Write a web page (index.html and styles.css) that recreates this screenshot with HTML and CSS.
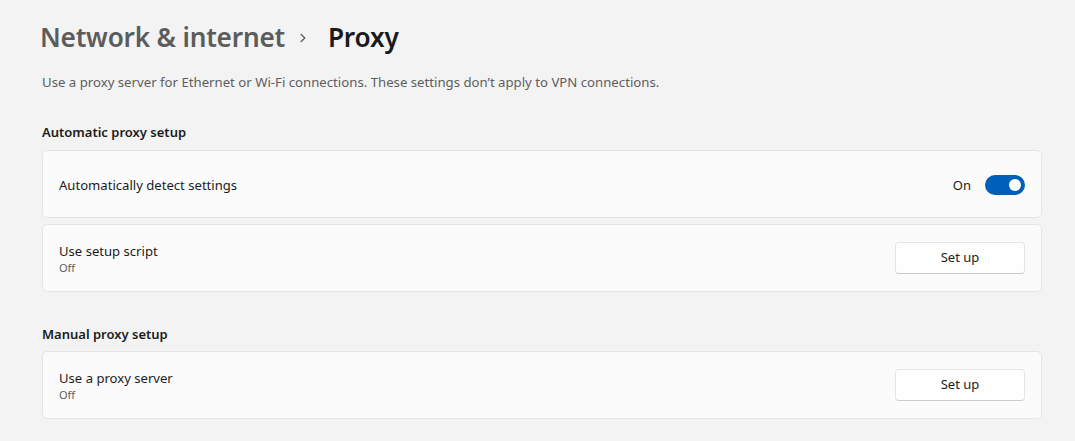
FILE: index.html
```html
<!DOCTYPE html>
<html lang="en">
<head>
<meta charset="utf-8">
<title>Proxy</title>
<link rel="stylesheet" href="styles.css">
</head>
<body>
<main class="page">
  <header class="breadcrumb">
    <span class="crumb-parent">Network &amp; internet</span>
    <svg class="crumb-chevron" width="12" height="12" viewBox="0 0 12 12" aria-hidden="true"><path d="M4.2 2.5 L7.8 6 L4.2 9.5" fill="none" stroke="#5f5f5f" stroke-width="1.4" stroke-linecap="round" stroke-linejoin="round"/></svg>
    <span class="crumb-current">Proxy</span>
  </header>
  <p class="description">Use a proxy server for Ethernet or Wi-Fi connections. These settings don’t apply to VPN connections.</p>

  <section class="group">
    <h2 class="group-title">Automatic proxy setup</h2>
    <div class="cards">
      <div class="card card-single">
        <div class="card-text"><div class="card-label">Automatically detect settings</div></div>
        <div class="card-action">
          <span class="toggle-label">On</span>
          <span class="toggle"><span class="toggle-knob"></span></span>
        </div>
      </div>
      <div class="card">
        <div class="card-text">
          <div class="card-label">Use setup script</div>
          <div class="card-sub">Off</div>
        </div>
        <div class="card-action"><button class="btn">Set up</button></div>
      </div>
    </div>
  </section>

  <section class="group group-manual">
    <h2 class="group-title">Manual proxy setup</h2>
    <div class="cards">
      <div class="card">
        <div class="card-text">
          <div class="card-label">Use a proxy server</div>
          <div class="card-sub">Off</div>
        </div>
        <div class="card-action"><button class="btn">Set up</button></div>
      </div>
    </div>
  </section>
</main>
</body>
</html>
```

FILE: styles.css
```css
* { box-sizing: border-box; }
html, body { margin: 0; padding: 0; }
body {
  background: #f3f3f3;
  font-family: "Noto Sans", "Open Sans", sans-serif;
  color: #1b1b1b;
  width: 1075px;
  height: 441px;
  overflow: hidden;
}
.page {
  padding: 17px 33px 0 42px;
}
.breadcrumb {
  display: flex;
  align-items: center;
  height: 40px;
  margin-left: -2px;
  font-size: 26.2px;
  font-weight: 600;
  letter-spacing: -0.2px;
}
.crumb-parent { color: #5c5c5c; }
.crumb-chevron { margin: 2px 19px 0 12px; }
.crumb-current { color: #1a1a1a; }
.description {
  margin: 15px 0 0 0;
  font-size: 13.2px;
  line-height: 20px;
  color: #5d5d5d;
}
.group { margin-top: 30px; }
.group-manual { margin-top: 32px; }
.group-title {
  margin: 0 0 8px 0;
  font-size: 13px;
  font-weight: 600;
  line-height: 20px;
  color: #1b1b1b;
}
.group-manual .group-title { margin-bottom: 7px; }
.cards {
  display: flex;
  flex-direction: column;
  gap: 6px;
}
.card {
  display: flex;
  align-items: center;
  justify-content: space-between;
  height: 68px;
  padding: 0 16px;
  background: #fbfbfb;
  border: 1px solid #e5e5e5;
  border-radius: 5px;
}
.card-single { padding: 2px 16px 0 16px; }
.card-label {
  font-size: 13.1px;
  line-height: 18px;
  color: #1b1b1b;
}
.card-sub {
  font-size: 11px;
  line-height: 15px;
  color: #5d5d5d;
}
.card-action {
  display: flex;
  align-items: center;
}
.toggle-label {
  font-size: 13px;
  color: #1b1b1b;
  margin-right: 14px;
}
.toggle {
  display: flex;
  align-items: center;
  justify-content: flex-end;
  width: 40px;
  height: 20px;
  border-radius: 10px;
  background: #005fb8;
  padding-right: 4px;
}
.toggle-knob {
  width: 12px;
  height: 12px;
  border-radius: 50%;
  background: #ffffff;
}
.btn {
  width: 130px;
  height: 32px;
  font-family: inherit;
  font-size: 13px;
  color: #1b1b1b;
  background: #fefefe;
  border: 1px solid #e5e5e5;
  border-bottom-color: #cccccc;
  border-radius: 4px;
  padding: 0 0 2px 0;
}
```
